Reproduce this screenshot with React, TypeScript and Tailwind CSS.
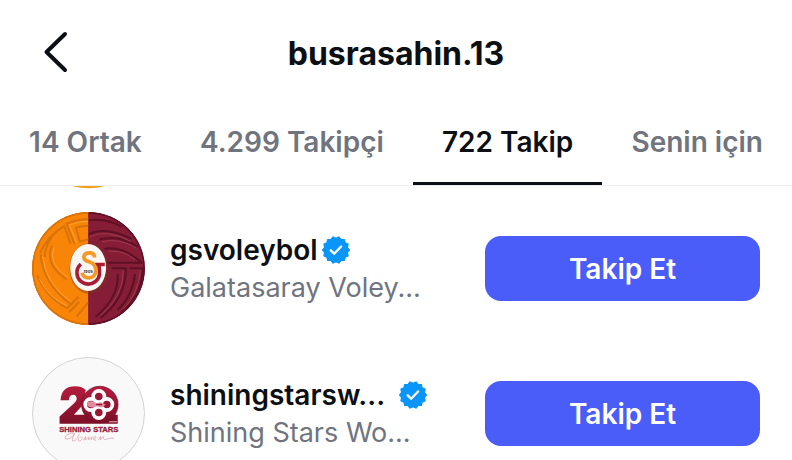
import type { ReactNode } from "react";

type Tab = { id: string; label: string };
type Account = { username: string; name: string; avatar: ReactNode; gap: string };

const TABS: Tab[] = [
  { id: "mutual", label: "14 Ortak" },
  { id: "followers", label: "4.299 Takipçi" },
  { id: "following", label: "722 Takip" },
  { id: "suggested", label: "Senin için" },
];

const ACCOUNTS: Account[] = [
  { username: "gsvoleybol", name: "Galatasaray Voley...", avatar: <VolleyAvatar />, gap: "gap-1" },
  { username: "shiningstarsw...", name: "Shining Stars Wo...", avatar: <StarsAvatar />, gap: "gap-3.5" },
];

// 14-point seal, alternating outer and inner radius
const SEAL = Array.from({ length: 28 }, (_, i) => {
  const r = i % 2 === 0 ? 19 : 16.5;
  const angle = (i * Math.PI) / 14;
  return `${20 + r * Math.cos(angle)},${20 + r * Math.sin(angle)}`;
}).join(" ");

export default function App() {
  return (
    <div className="flex h-screen flex-col overflow-hidden bg-white font-['Inter','Liberation_Sans',sans-serif] text-[#0c1014]">
      <header className="grid grid-cols-[1fr_auto_1fr] items-center px-10 pt-7 pb-6">
        <button type="button" aria-label="Geri" className="w-8">
          <svg viewBox="0 0 32 48" className="h-12 w-8" fill="none" stroke="currentColor" strokeWidth="4" strokeLinecap="round" strokeLinejoin="round">
            <path d="M25 4 6.500 22 25 40" />
          </svg>
        </button>
        <h1 className="text-[32px] leading-[52px] font-bold">busrasahin.13</h1>
      </header>

      <nav className="flex border-b border-[#ebedf0]">
        {TABS.map((t) => (
          <TabButton key={t.id} label={t.label} active={t.id === "following"} />
        ))}
      </nav>

      <main className="flex-1 overflow-hidden">
        {/* bottom edge of the row scrolled under the tabs */}
        <div className="h-[10px] px-8">
          <svg viewBox="0 0 113 10" className="h-[10px] w-[113px]">
            <path d="M40 0h33q-16 4.500-33 0Z" fill="#f0a020" />
          </svg>
        </div>
        <ul>
          {ACCOUNTS.map((a) => (
            <AccountRow key={a.username} account={a} />
          ))}
        </ul>
      </main>
    </div>
  );
}

function TabButton({ label, active }: { label: string; active: boolean }) {
  return (
    <button
      type="button"
      className={`flex-auto border-b-[3px] pt-[18px] pb-5 text-[28px] leading-10 font-semibold whitespace-nowrap ${
        active ? "border-[#0c1014]" : "border-transparent text-[#6f747e]"
      }`}
    >
      {label}
    </button>
  );
}

function AccountRow({ account }: { account: Account }) {
  return (
    <li className="flex items-center px-8 py-4">
      <div className="size-[113px] shrink-0">{account.avatar}</div>
      <div className="ml-[25px] min-w-0 flex-1 whitespace-nowrap">
        <div className={`flex items-center ${account.gap}`}>
          <span className="text-[28px] leading-[38px] font-semibold">{account.username}</span>
          <Verified />
        </div>
        <p className="text-[27px] leading-[38px] text-[#6f747e]">{account.name}</p>
      </div>
      <button type="button" className="h-[65px] w-[275px] shrink-0 rounded-2xl bg-[#4a5df9] text-[28px] font-semibold text-white">
        Takip Et
      </button>
    </li>
  );
}

function Verified() {
  return (
    <svg viewBox="0 0 40 40" className="size-7 shrink-0" role="img" aria-label="Doğrulanmış">
      <polygon points={SEAL} fill="#0a95f8" stroke="#0a95f8" strokeWidth="2" strokeLinejoin="round" />
      <path d="m12.5 20.500 4.800 4.800 10-10.300" fill="none" stroke="#fff" strokeWidth="3.400" strokeLinecap="round" strokeLinejoin="round" />
    </svg>
  );
}

function VolleyAvatar() {
  return (
    <svg viewBox="24 95 340 340" className="size-full" role="img" aria-label="gsvoleybol">
      <defs>
        <clipPath id="ball-left">
          <path d="M194 95a170 170 0 0 0 0 340Z" />
        </clipPath>
        <clipPath id="ball-right">
          <path d="M194 95a170 170 0 0 1 0 340Z" />
        </clipPath>
      </defs>
      <circle cx="194" cy="265" r="169" fill="#841d35" />
      <g clipPath="url(#ball-left)" fill="none" strokeLinejoin="round">
        <path d="M24 95h170v340H24Z" fill="#f88508" />
        <g stroke="#d97208" strokeWidth="6">
          <circle cx="194" cy="265" r="168" />
          <path d="M200 116q-38 0-72 14l24 62M200 136q-26 0-44 6l12 42 30-8" />
          <path d="M122 136q-52 32-74 82M122 140l18 50M94 156q-30 34-32 74M50 222q6 88 90 150M84 196q-24 56 44 102" />
          <path d="M40 286q26 66 90 98l34-34M136 396l30-30M158 410l36-44" />
        </g>
        <g stroke="#ffa235" strokeWidth="3">
          <path d="M200 122q-34 0-64 12l22 54M56 228q8 82 84 136M90 202q-20 48 42 90M46 296q28 58 84 82" />
        </g>
      </g>
      <g clipPath="url(#ball-right)" fill="none" strokeLinejoin="round">
        <g stroke="#5e1024" strokeWidth="6">
          <circle cx="194" cy="265" r="168" />
          <path d="M190 120q60-8 104 20M190 164q54-28 134 12M226 178q60-16 116 22M242 206q56-10 112 42H248" />
          <path d="M264 264h42q2 88-76 150M282 282q4 70-66 128M318 264h40q-4 84-66 134M334 282q-8 66-52 108" />
        </g>
        <g stroke="#a03a4d" strokeWidth="3">
          <path d="M196 170q54-26 126 14M234 184q54-12 104 20M254 213q48-4 80 26M299 270q0 80-68 136M350 270q-6 74-52 118" />
        </g>
      </g>
      <ellipse cx="195" cy="265" rx="58" ry="76" fill="#7a3a18" opacity="0.45" />
      <ellipse cx="193" cy="262" rx="54" ry="71" fill="#f8f5f2" />
      <g fill="none" strokeWidth="11">
        <path d="M243 253h-30M171 252a34 34 0 1 0 56 22q0-9-2-18" stroke="#a81d36" />
        <path d="M212 232q0-14-15-14-16 0-17 13 1 10 16 14 20 6 20 26-1 21-21 22-16 0-21-15" stroke="#f29a24" />
      </g>
      <text x="193" y="278" textAnchor="middle" fontSize="12" fontWeight="700" fill="#333">1905</text>
    </svg>
  );
}

function StarsAvatar() {
  return (
    <svg viewBox="24 20 340 340" className="size-full" role="img" aria-label="shiningstarsw">
      <defs>
        <linearGradient id="ruby" x1="0" y1="0" x2="0" y2="1">
          <stop offset="0" stopColor="#b51c3e" />
          <stop offset="1" stopColor="#7c1028" />
        </linearGradient>
      </defs>
      <circle cx="194" cy="190" r="168.500" fill="#f9f9f9" stroke="#d3d3d5" strokeWidth="3" />
      <path d="M110 150q2-42 44-42 22 0 32 12l-14 50-22 24h132v27H107v-22l42-38q12-11 9-20-4-9-13-7-10 2-10 16Z" fill="url(#ruby)" />
      <circle cx="228" cy="163" r="55" fill="url(#ruby)" stroke="#6d0d22" strokeWidth="2" />
      <g fill="#9a1733" stroke="#fff" strokeWidth="11">
        <circle cx="225" cy="139" r="17" />
        <circle cx="249" cy="163" r="17" />
        <circle cx="225" cy="187" r="17" />
        <circle cx="201" cy="163" r="17" />
      </g>
      <path d="M190 157q14-8 28 2l14-3 14 8-14 8-14-4q-14 8-28-1Z" fill="#e58ba0" />
      <path d="M217 163h18" stroke="#8b1530" strokeWidth="4" />
      <path d="M256 215h24" stroke="#e6b5c0" strokeWidth="3" />
      <text x="195" y="246" textAnchor="middle" fontSize="23" fontWeight="700" fill="#96203b" stroke="#96203b" className="font-['Liberation_Sans',sans-serif]">
        SHINING STARS
      </text>
      <path
        d="M150 249c-26 0-34 20-20 18 12-2 20-12 22-17-6 14-10 23-4 23 8 0 16-14 18-22m0 12c-6 7-1 13 5 8 7-6 4-12-1-10m9 10 6-11v10l10-10-1 10 10-10-1 10m6-4c8 0 10-7 5-7-7 1-8 13 3 11m7 0 6-11v10l10-10c-4 9 2 11 10 8s10-4 20-2"
        fill="none"
        stroke="#dfa3b0"
        strokeWidth="2.500"
      />
    </svg>
  );
}
